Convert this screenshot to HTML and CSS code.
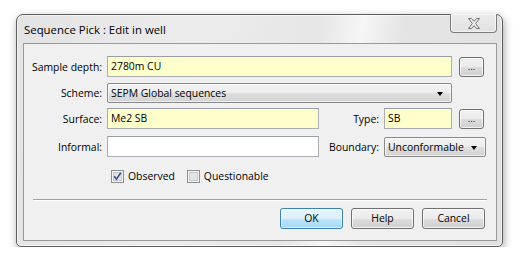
FILE: index.html
```html
<!DOCTYPE html>
<html>
<head>
<meta charset="utf-8">
<link rel="stylesheet" href="styles.css">
</head>
<body>
<div class="desktop">
  <div class="window">
    <div class="titlebar">
      <span class="title">Sequence Pick : Edit in well</span>
      <div class="close">
        <svg width="14" height="11" viewBox="0 0 14 11"><path d="M1.5 0.5 H4.5 L7 3.3 L9.5 0.5 H12.5 L8.6 5.5 L12.5 10.5 H9.5 L7 7.7 L4.5 10.5 H1.5 L5.4 5.5 Z" fill="#eeeeee" stroke="#6f6f6f" stroke-width="1"/></svg>
      </div>
    </div>
    <div class="client">
      <div class="row r1">
        <label class="lbl">Sample depth:</label>
        <div class="field yellow w345">2780m CU</div>
        <div class="dots">...</div>
      </div>
      <div class="row r2">
        <label class="lbl">Scheme:</label>
        <div class="combo w345"><span>SEPM Global sequences</span><i class="arrow"></i></div>
      </div>
      <div class="row r3">
        <label class="lbl">Surface:</label>
        <div class="field yellow w212">Me2 SB</div>
        <label class="lbl2">Type:</label>
        <div class="field yellow w68">SB</div>
        <div class="dots">...</div>
      </div>
      <div class="row r4">
        <label class="lbl">Informal:</label>
        <div class="field white w212"></div>
        <label class="lbl2">Boundary:</label>
        <div class="combo w102"><span>Unconformable</span><i class="arrow"></i></div>
      </div>
      <div class="checks">
        <span class="check">
          <svg width="13" height="13" viewBox="0 0 13 13"><rect x="0.5" y="0.5" width="12" height="12" fill="#f4f4f4" stroke="#8e8f8f"/><rect x="2.5" y="2.5" width="8" height="8" fill="#e2e4e7" stroke="#c6c9cf"/><path d="M3.2 6.3 L5.4 9.2 L9.8 2.8" fill="none" stroke="#3d5387" stroke-width="1.6"/></svg>
          Observed
        </span>
        <span class="check">
          <svg width="13" height="13" viewBox="0 0 13 13"><rect x="0.5" y="0.5" width="12" height="12" fill="#f4f4f4" stroke="#8e8f8f"/><rect x="2.5" y="2.5" width="8" height="8" fill="#e2e4e7" stroke="#c6c9cf"/></svg>
          Questionable
        </span>
      </div>
      <div class="sep"></div>
      <div class="buttons">
        <div class="btn default">OK</div>
        <div class="btn">Help</div>
        <div class="btn">Cancel</div>
      </div>
    </div>
  </div>
</div>
</body>
</html>
```
FILE: styles.css
```css
html, body {
  margin: 0;
  padding: 0;
  background: #ffffff;
}
body {
  font-family: "Segoe UI", "Open Sans", sans-serif;
  font-size: 10.4px;
  color: #000;
}
.desktop {
  padding: 14px 0 0 16px;
}
.window {
  width: 487px;
  height: 233px;
  box-sizing: border-box;
  border: 1px solid #5e5e5e;
  border-radius: 7px 7px 5px 5px;
  padding: 0 5px 5px 6px;
  display: flex;
  flex-direction: column;
  background: linear-gradient(100deg, #e3e3e3 0%, #ececec 35%, #e6e6e6 58%, #f6f6f6 66%, #e4e4e4 74%, #e2e2e2 100%);
  box-shadow: inset 0 0 0 1px rgba(255,255,255,0.55), 1px 3px 8px rgba(0,0,0,0.35);
}
.titlebar {
  height: 28px;
  display: flex;
  align-items: flex-start;
  flex: none;
}
.title {
  padding: 8px 0 0 1px;
  font-size: 11.4px;
  line-height: 14px;
  color: #000;
}
.close {
  margin-left: auto;
  margin-top: -1px;
  width: 47px;
  height: 19px;
  box-sizing: border-box;
  border: 1px solid #7c7c7c;
  border-top: none;
  border-radius: 0 0 4px 4px;
  background: linear-gradient(#ececec, #e2e2e2);
  box-shadow: inset 0 0 0 1px rgba(255,255,255,0.6);
  display: flex;
  align-items: center;
  justify-content: center;
}
.close svg { display: block; margin-top: 1px; }
.client {
  flex: 1;
  border: 1px solid #999;
  background: #f0f0f0;
  padding: 12px 0 0 0;
  display: flex;
  flex-direction: column;
}
.row {
  display: flex;
  align-items: center;
  height: 21px;
}
.r2 { margin-top: 5px; }
.r3 { margin-top: 5px; }
.r4 { margin-top: 7px; }
.lbl {
  width: 78px;
  text-align: right;
  margin-right: 5px;
  white-space: nowrap;
}
.lbl2 {
  width: 60px;
  text-align: right;
  margin-right: 5px;
  white-space: nowrap;
}
.field {
  height: 21px;
  box-sizing: border-box;
  border: 1px solid #abadb3;
  border-top-color: #9a9ca3;
  padding: 0 3px;
  line-height: 19px;
  white-space: nowrap;
}
.yellow { background: #ffffcc; }
.white { background: #ffffff; }
.w345 { width: 345px; }
.w212 { width: 212px; }
.w68 { width: 68px; }
.w102 { width: 102px; }
.dots {
  margin-left: 7px;
  width: 25px;
  height: 20px;
  box-sizing: border-box;
  border: 1px solid #707070;
  border-radius: 3px;
  background: linear-gradient(#f2f2f2 0%, #ebebeb 50%, #dddddd 51%, #cfcfcf 100%);
  box-shadow: inset 0 0 0 1px rgba(255,255,255,0.7);
  text-align: center;
  line-height: 17px;
  font-size: 9.5px;
}
.combo {
  height: 20px;
  box-sizing: border-box;
  border: 1px solid #8a8a8a;
  border-radius: 2px;
  background: linear-gradient(#f3f3f3 0%, #ececec 50%, #dfdfdf 51%, #d3d3d3 100%);
  box-shadow: inset 0 0 0 1px rgba(255,255,255,0.6);
  display: flex;
  align-items: center;
  padding: 0 8px 0 3px;
  white-space: nowrap;
}
.combo span { flex: 1; line-height: 18px; }
.arrow {
  width: 0;
  height: 0;
  border-left: 3.5px solid transparent;
  border-right: 3.5px solid transparent;
  border-top: 4px solid #000;
  margin-top: 2px;
}
.checks {
  display: flex;
  align-items: center;
  margin: 12px 0 0 87px;
  height: 15px;
}
.check {
  display: flex;
  align-items: center;
  margin-right: 12px;
  line-height: 15px;
}
.check svg { display: block; margin-right: 4px; }
.sep {
  margin: 15px 9px 0 9px;
  height: 1px;
  background: #a0a0a0;
  border-bottom: 1px solid #ffffff;
}
.buttons {
  display: flex;
  justify-content: flex-end;
  gap: 8px;
  margin: 7px 11px 0 0;
}
.btn {
  width: 63px;
  height: 21px;
  box-sizing: border-box;
  border: 1px solid #707070;
  border-radius: 3px;
  background: linear-gradient(#f2f2f2 0%, #ebebeb 50%, #dddddd 51%, #cfcfcf 100%);
  box-shadow: inset 0 0 0 1px rgba(255,255,255,0.7);
  text-align: center;
  line-height: 19px;
}
.btn.default {
  border-color: #3c7fb1;
  background: linear-gradient(#eaf6fd 0%, #d9f0fc 50%, #bee6fd 51%, #a7d9f5 100%);
  box-shadow: inset 0 0 0 1px rgba(255,255,255,0.5);
}
```
